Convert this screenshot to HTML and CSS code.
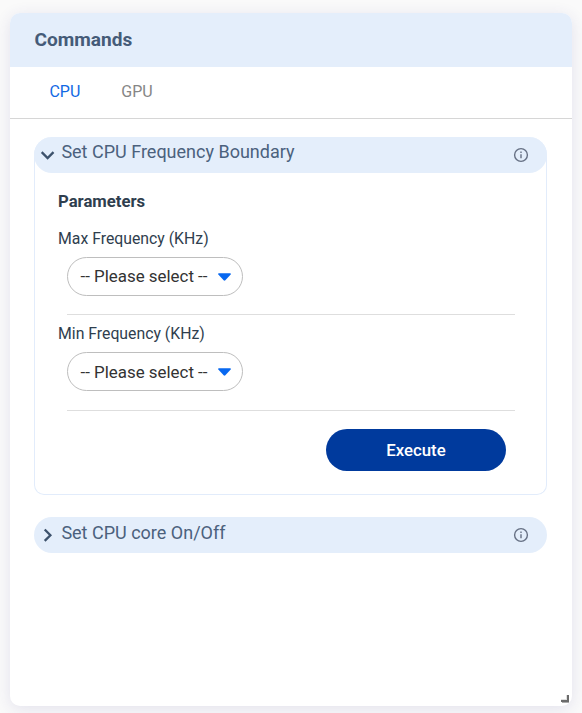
FILE: index.html
```html
<!DOCTYPE html>
<html lang="en">
<head>
<meta charset="utf-8">
<title>Commands</title>
<link rel="stylesheet" href="styles.css">
</head>
<body>
<main class="card">
  <header class="card-header"><h1>Commands</h1></header>
  <nav class="tabs">
    <a class="tab active">CPU</a>
    <a class="tab">GPU</a>
  </nav>
  <section class="command open">
    <div class="command-bar">
      <svg class="chevron" viewBox="0 0 16 16"><path d="M1.7 5.1 7.6 11l5.9-5.9"/></svg>
      <h2>Set CPU Frequency Boundary</h2>
      <svg class="info" viewBox="0 0 16 16"><circle cx="8" cy="8" r="6.4"/><path d="M8 7.2v4M8 4.5v1.4"/></svg>
    </div>
    <div class="command-body">
      <h3>Parameters</h3>
      <div class="field">
        <label>Max Frequency (KHz)</label>
        <div class="select"><span>-- Please select --</span><svg class="caret" viewBox="0 0 12 7"><path d="M.8 0h10.4q1.1.3.5 1.2L6.8 6.5q-.8.7-1.6 0L.3 1.2Q-.3.3.8 0z"/></svg></div>
      </div>
      <div class="field second">
        <label>Min Frequency (KHz)</label>
        <div class="select"><span>-- Please select --</span><svg class="caret" viewBox="0 0 12 7"><path d="M.8 0h10.4q1.1.3.5 1.2L6.8 6.5q-.8.7-1.6 0L.3 1.2Q-.3.3.8 0z"/></svg></div>
      </div>
      <button class="execute">Execute</button>
    </div>
  </section>
  <section class="command">
    <div class="command-bar">
      <svg class="chevron" viewBox="0 0 16 16"><path d="M4.7 2.5 10.4 8.2l-5.7 5.7"/></svg>
      <h2>Set CPU core On/Off</h2>
      <svg class="info" viewBox="0 0 16 16"><circle cx="8" cy="8" r="6.4"/><path d="M8 7.2v4M8 4.5v1.4"/></svg>
    </div>
  </section>
  <svg class="resize" viewBox="0 0 8 8"><path class="light" d="M5 0h1v5H0v-1h5z"/><path class="dark" d="M6 0h2v7H0V5h6z"/><path class="edge" d="M1 7h7v1H1z"/></svg>
</main>
</body>
</html>
```
FILE: styles.css
```css
* { box-sizing: border-box; }
body {
  margin: 0;
  height: 713px;
  padding: 13px 10px 7px;
  overflow: hidden;
  background: #fafafa;
  font-family: Roboto, "Liberation Sans", sans-serif;
  font-size: 16px;
  color: #2f3e4e;
}
h1, h2, h3 { margin: 0; }
.card {
  position: relative;
  height: 693px;
  border-radius: 10px;
  background: #fff;
  box-shadow: 0 3px 16px rgba(60, 50, 140, .12);
}
.card-header {
  height: 54px;
  padding-left: 24.4px;
  border-radius: 10px 10px 0 0;
  background: #e4eefb;
}
.card-header h1 {
  font-size: 19.1px;
  font-weight: 700;
  line-height: 54px;
  color: #455b78;
}
.tabs {
  display: flex;
  gap: 41px;
  height: 52px;
  padding-left: 39.4px;
  border-bottom: 1px solid #d6d6d6;
}
.tab { line-height: 49px; color: #868686; }
.tab.active { color: #1269e4; }
.command { margin: 22px 25px 0 24px; }
.command.open {
  height: 358px;
  margin-top: 18px;
  border: 1px solid #e2ecfb;
  border-top: 0;
  border-radius: 18px 18px 10px 10px;
}
.command-bar {
  display: flex;
  align-items: center;
  height: 36px;
  padding: 0 17.6px 0 6px;
  border-radius: 18px;
  background: #e4eefb;
}
.open .command-bar { margin: 0 -1px; }
.chevron {
  width: 16px;
  height: 16px;
  margin-right: 5.4px;
  fill: none;
  stroke: #3d526c;
  stroke-width: 2.3;
}
.command-bar h2 {
  flex: 1;
  height: 36px;
  font-size: 18px;
  font-weight: 400;
  line-height: 31px;
  color: #4b617d;
}
.open .command-bar h2 { line-height: 29px; }
.info {
  width: 16px;
  height: 16px;
  fill: none;
  stroke: #667084;
  stroke-width: 1.4;
}
.command-body { padding: 18px 31px 0 23px; }
.command-body h3 {
  height: 38px;
  font-size: 16.7px;
  font-weight: 700;
  line-height: 21px;
}
.field { height: 86px; }
.field label {
  display: block;
  height: 28px;
  font-size: 15.8px;
  line-height: 19px;
}
.field::after {
  content: "";
  display: block;
  height: 1px;
  margin: 18px 0 0 9px;
  background: #dedede;
}
.field.second { margin-top: 9px; height: 87px; }
.field.second::after { margin-top: 19px; }
.select {
  display: flex;
  align-items: center;
  justify-content: space-between;
  width: 176px;
  height: 39px;
  margin-left: 9px;
  padding: 0 11.5px 0 12.5px;
  border: 1px solid #bebebe;
  border-radius: 20px;
  font-size: 16.9px;
  line-height: 20px;
  color: #333;
}
.field:not(.second) .select span { margin-top: -2px; }
.caret { width: 13px; height: 8px; fill: #0868f0; }
.execute {
  display: block;
  width: 180px;
  height: 42px;
  margin: 18px 9px 0 auto;
  border: 0;
  border-radius: 21px;
  background: #003a9d;
  color: #fff;
  font: 500 16.8px Roboto, "Liberation Sans", sans-serif;
}
.resize {
  position: absolute;
  right: 3px;
  bottom: 3px;
  width: 8px;
  height: 8px;
  shape-rendering: crispEdges;
}
.resize .light { fill: #e0e0e0; }
.resize .dark { fill: #6b6b6b; }
.resize .edge { fill: #aaa; }
```
